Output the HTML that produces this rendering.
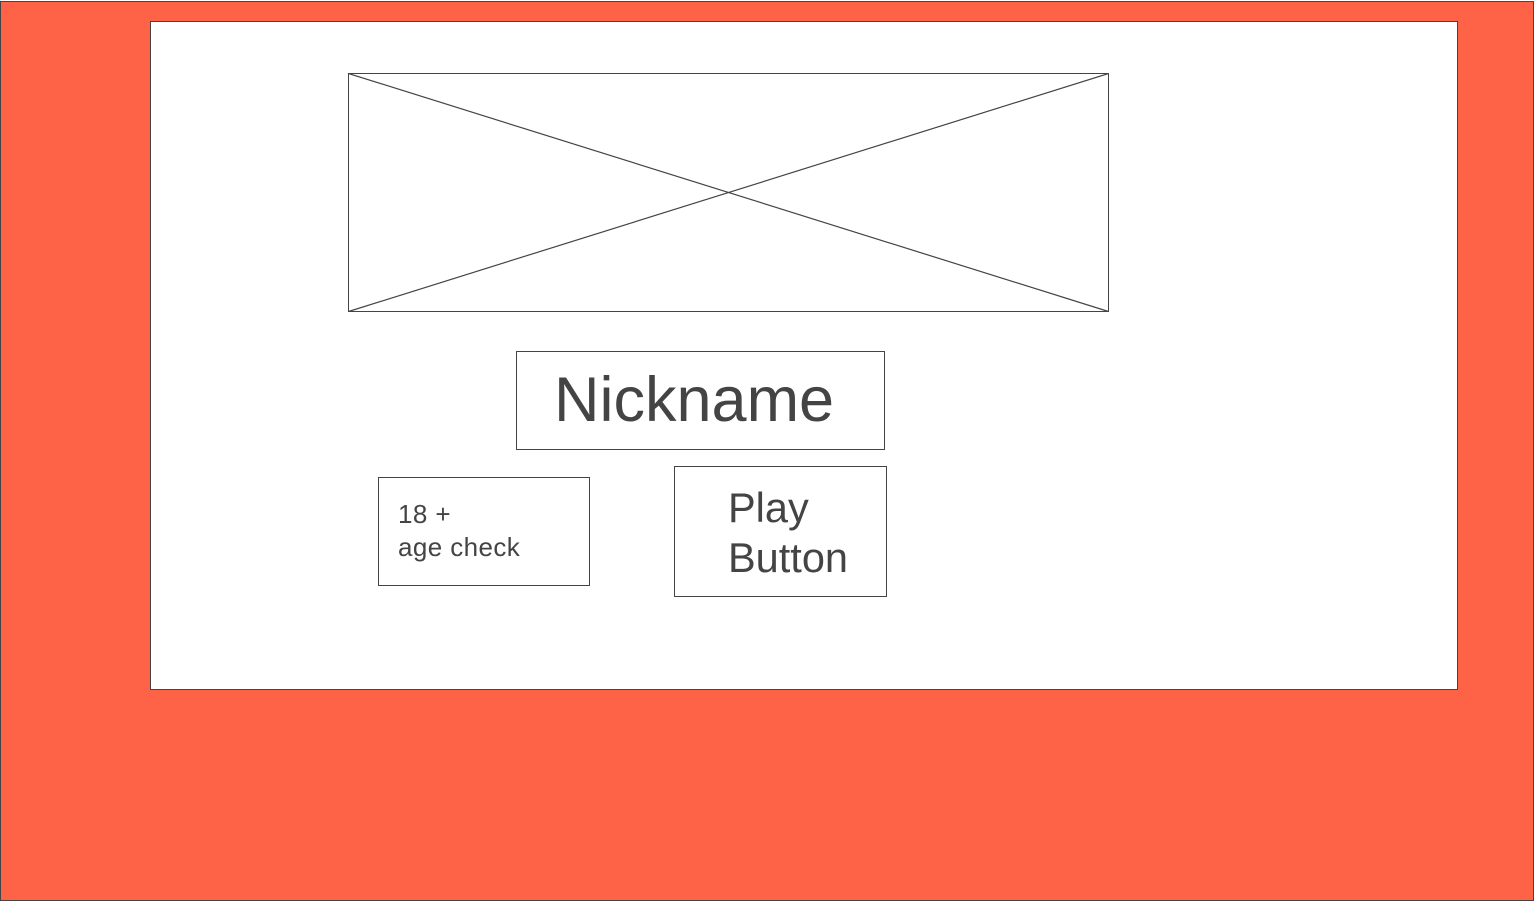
<!DOCTYPE html>
<html><head><meta charset="utf-8"><style>
html,body{margin:0;padding:0;background:#fff;width:1537px;height:894px;overflow:hidden;font-family:"Liberation Sans",sans-serif;color:#444}
.abs{position:absolute;box-sizing:border-box}
</style></head><body>
<div class="abs" style="left:0;top:1px;width:1534px;height:900px;background:#ff6347;border:1px solid #444"></div>
<div class="abs" style="left:150px;top:21px;width:1308px;height:669px;background:#fff;border:1px solid #444"></div>
<svg class="abs" style="left:348px;top:73px" width="762" height="240">
<rect x="0.5" y="0.5" width="760" height="238" fill="#fff" stroke="#444"/>
<line x1="0.5" y1="0.5" x2="760.5" y2="238.5" stroke="#444" stroke-width="1.2"/>
<line x1="760.5" y1="0.5" x2="0.5" y2="238.5" stroke="#444" stroke-width="1.2"/>
</svg>
<div class="abs" style="left:516px;top:351px;width:369px;height:99px;border:1px solid #444"></div>
<div class="abs" style="left:554px;top:361px;font-size:63px;line-height:78px">Nickname</div>
<div class="abs" style="left:378px;top:477px;width:212px;height:109px;border:1px solid #444"></div>
<div class="abs" style="left:398px;top:498px;font-size:26px;line-height:33px;letter-spacing:0.4px">18 +<br>age check</div>
<div class="abs" style="left:674px;top:466px;width:213px;height:131px;border:1px solid #444"></div>
<div class="abs" style="left:728px;top:483px;font-size:41.5px;line-height:50px">Play<br>Button</div>
</body></html>
